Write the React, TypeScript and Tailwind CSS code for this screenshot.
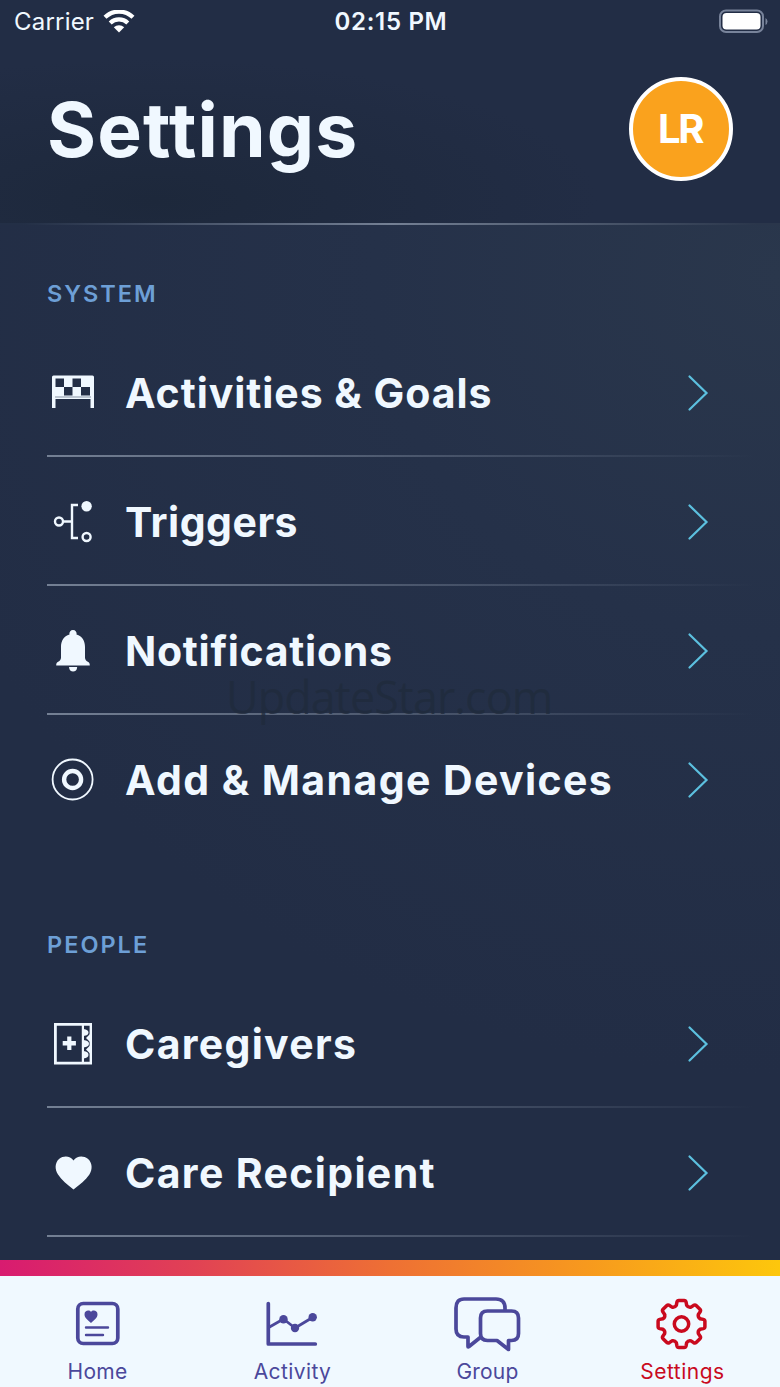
import type { ReactNode } from "react";

function gearPath() {
  const parts: string[] = [];
  for (let i = 0; i < 8; i++) {
    const a = (i * Math.PI) / 4;
    const p = (x: number, y: number) =>
      `${(x * Math.cos(a) - y * Math.sin(a)).toFixed(2)} ${(x * Math.sin(a) + y * Math.cos(a)).toFixed(2)}`;
    parts.push(
      `${i === 0 ? "M" : "L"}${p(-5.2, -18.6)}`,
      `L${p(-4.6, -21.8)}`,
      `Q${p(-4.2, -23.4)} ${p(-2.7, -23.4)}`,
      `L${p(2.7, -23.4)}`,
      `Q${p(4.2, -23.4)} ${p(4.6, -21.8)}`,
      `L${p(5.2, -18.6)}`,
      `Q${p(6.7, -16.2)} ${p(9.47, -16.83)}`
    );
  }
  return parts.join(" ") + "Z";
}

const FlagIcon = () => (
  <svg width="44" height="44" viewBox="0 0 44 44" fill="#f0f8ff">
    <path
      fillRule="evenodd"
      d="M1 6q0-1.500 1.500-1.500h39q1.500 0 1.500 1.500v31h-3.500v-9h-35v9H1zM4.500 7.500v8.500h8.500v-8.500zM13 16v8.500h8.500V16zM21.500 7.500V16H30V7.500zM30 16v8.500h9V16z"
    />
    <path d="M4 25.600h36v1H4z" fill="#8793a5" />
  </svg>
);

const TriggerIcon = () => (
  <svg width="44" height="44" viewBox="0 0 44 44" fill="none" stroke="#f0f8ff" strokeWidth="2.400">
    <circle cx="8" cy="21.500" r="4" />
    <path d="M13 21.500h7.500M27 5h-6v33h6" />
    <circle cx="35.600" cy="6.200" r="5.200" fill="#f0f8ff" stroke="none" />
    <circle cx="35.600" cy="37" r="4" />
  </svg>
);

const BellIcon = () => (
  <svg width="44" height="44" viewBox="0 0 44 44" fill="#f0f8ff">
    <path d="M22 1a3.600 3.600 0 0 1 3.500 4.600C31.200 7.300 34 12 34 18v10.500c0 2 1 3.300 2.800 4.300 1.300.7 2 1.500 2 3.700H5.200c0-2.200.7-3 2-3.700C9 31.800 10 30.500 10 28.500V18C10 12 12.800 7.300 18.500 5.600A3.600 3.600 0 0 1 22 1z" />
    <path d="M18 38h8.200c0 6-8.200 6-8.200 0z" />
  </svg>
);

const DeviceIcon = () => (
  <svg width="44" height="44" viewBox="0 0 44 44" fill="none" stroke="#f0f8ff">
    <circle cx="21.600" cy="21.500" r="20" strokeWidth="1.800" />
    <circle cx="21.600" cy="21.500" r="8.500" strokeWidth="4.400" />
  </svg>
);

const CaregiverIcon = () => (
  <svg width="44" height="44" viewBox="0 0 44 44" fill="#f0f8ff">
    <path fillRule="evenodd" d="M3 1h38v41.500H3zM5.800 3.800v35.900h25V3.800zM33 3.800v35.900h5.600V3.800z" />
    <path d="M16.200 14.500h4.200v4.600h4.500v4.300h-4.500V28h-4.200v-4.600h-4.500v-4.300h4.500z" />
    <path d="M32.500 7q5 .5 5 3.500t-5 3.500zM32.500 18q5.500.5 5.500 3.700t-5.500 3.700zM32.500 29q5 .5 5 3.700t-5 3.700z" />
    <path d="M39 12l-4 4 4 4zM39 23.500l-4 4 4 4z" />
  </svg>
);

const HeartIcon = () => (
  <svg width="44" height="44" viewBox="0 0 44 44" fill="#f0f8ff">
    <path d="M22.500 9.500C25.700 4.700 32.500 4.400 36.800 7.800c4.700 3.900 4.900 10.800 1.600 15.700C34.700 29 29 33.500 22.500 38.500 16 33.500 10.700 29 7 23.500c-3.300-4.900-3.400-11.800 1.300-15.700C12.500 4.400 19.300 4.700 22.500 9.500z" />
  </svg>
);

function Row({ icon, label, spacing, divider = true }: { icon: ReactNode; label: string; spacing: string; divider?: boolean }) {
  return (
    <div className="h-[129px]">
      <div className="flex h-[127px] items-center pl-[4px] pr-[45px]">
        {icon}
        <span className={`ml-[30px] flex-1 whitespace-nowrap pt-[2px] text-[41px] font-bold leading-none text-[#f0f8ff] ${spacing}`}>{label}</span>
        <svg width="22" height="38" viewBox="0 0 22 38" fill="none" stroke="#5cc0df" strokeWidth="2.200" strokeLinecap="round">
          <path d="M2.500 2.500l17 16.500-17 16.500" />
        </svg>
      </div>
      {divider && <div className="-mt-px h-[2px] bg-linear-to-r from-[#748094] to-[#748094]/0" />}
    </div>
  );
}

function Tab({ label, color, spacing, children }: { label: string; color: string; spacing: string; children: ReactNode }) {
  return (
    <div className={`flex flex-col items-center pt-[16px] ${color}`}>
      {children}
      <span className={`mt-[5px] text-[21px] leading-[26px] ${spacing}`}>{label}</span>
    </div>
  );
}

export default function App() {
  return (
    <div className="relative flex h-[1387px] w-[780px] flex-col overflow-hidden bg-[#222d45] font-['Inter',sans-serif]">
      <header className="flex h-[223px] flex-col bg-[radial-gradient(ellipse_at_20%_90%,#1d283b_0%,#222d45_50%)]">
        <div className="grid h-[44px] grid-cols-3 items-center pl-[14px] pr-[12px] text-[24px] leading-none text-[#f0f8ff]">
          <div className="flex items-center gap-[9px]">
            <span className="tracking-[0.2px]">Carrier</span>
            <svg width="32" height="24" viewBox="0 0 32 24" fill="none" stroke="white" strokeWidth="4.200">
              <path d="M2 7.300a20 20 0 0 1 28 0M7.200 12.900a12.600 12.600 0 0 1 17.600 0" />
              <path d="M16 22.500l-5.200-5.200a7.500 7.500 0 0 1 10.400 0z" fill="white" stroke="none" />
            </svg>
          </div>
          <span className="text-center text-[24px] font-semibold tracking-[0.700px]">02:15 PM</span>
          <svg className="justify-self-end" width="50" height="26" viewBox="0 0 50 26">
            <rect x="2" y="1.500" width="43" height="21.500" rx="6" fill="none" stroke="#78839a" strokeWidth="2" />
            <rect x="4.500" y="4" width="38" height="16.500" rx="4" fill="white" />
            <path d="M47.500 9q2 1 2 3.500t-2 3.500z" fill="#78839a" />
          </svg>
        </div>
        <div className="flex items-start justify-between pl-[47px] pr-[47px] pt-[33px]">
          <h1 className="mt-[8px] text-[75px] font-bold leading-[90px] tracking-[1.100px] text-[#f0f8ff]">Settings</h1>
          <div className="flex size-[104px] items-center justify-center rounded-full border-4 border-white bg-[#faa21d] pr-[2px] text-[40px] font-bold leading-none tracking-[-2.500px] text-white">LR</div>
        </div>
      </header>
      <div className="h-[2px] bg-[linear-gradient(90deg,#232f46_3%,#748094_50%,#2a364b_97%)]" />
      <main className="h-[1035px] overflow-hidden bg-[radial-gradient(ellipse_900px_800px_at_780px_50px,#2a374c_0%,#253149_45%,#222d45_100%)] pl-[47px] pr-[26px]">
        <h2 className="pt-[54px] text-[23.500px] font-semibold leading-[30px] tracking-[2px] text-[#6d9fd6]">SYSTEM</h2>
        <div className="pt-[20px]">
          <Row icon={<FlagIcon />} label="Activities & Goals" spacing="tracking-[0.950px]" />
          <Row icon={<TriggerIcon />} label="Triggers" spacing="tracking-[0.500px]" />
          <Row icon={<BellIcon />} label="Notifications" spacing="tracking-[0.720px]" />
          <Row icon={<DeviceIcon />} label="Add & Manage Devices" spacing="tracking-[1.400px]" divider={false} />
        </div>
        <h2 className="pt-[85px] text-[23.500px] font-semibold leading-[30px] tracking-[2px] text-[#6d9fd6]">PEOPLE</h2>
        <div className="pt-[20px]">
          <Row icon={<CaregiverIcon />} label="Caregivers" spacing="tracking-[1.300px]" />
          <Row icon={<HeartIcon />} label="Care Recipient" spacing="tracking-[1.350px]" />
        </div>
      </main>
      <div className="h-[16px] bg-[linear-gradient(90deg,#d81b70_0%,#e14254_25%,#ee7034_50%,#f7991e_75%,#fdc70c_100%)]" />
      <nav className="grid h-[111px] grid-cols-4 bg-[#f0f9ff]">
        <Tab label="Home" color="text-[#4b489b]" spacing="tracking-[0.300px]">
          <svg width="70" height="62" viewBox="1 0 70 62" fill="none" stroke="currentColor" strokeLinecap="round">
            <rect x="15.800" y="11.500" width="40" height="40" rx="5.500" strokeWidth="3.700" />
            <path d="M24 35.500h22M24 43h17" strokeWidth="2.400" />
            <path d="M29 20c1.500-2.400 6.500-1.800 6.500 2.300 0 3.900-3.700 6-6.500 8.700-2.800-2.700-6.500-4.800-6.500-8.700 0-4.100 5-4.700 6.500-2.300z" fill="currentColor" stroke="none" />
          </svg>
        </Tab>
        <Tab label="Activity" color="text-[#4b489b]" spacing="tracking-[0.400px]">
          <svg width="70" height="62" viewBox="0.5 0 70 62" fill="none" stroke="currentColor" strokeLinecap="round" strokeLinejoin="round">
            <path d="M10.800 11.500V52h47" strokeWidth="3.700" />
            <path d="M12 35l14-8 11.500 9L55 25.500" strokeWidth="2.800" />
            <g fill="currentColor" stroke="none">
              <circle cx="26" cy="27.200" r="4.200" />
              <circle cx="37.500" cy="36" r="4.200" />
              <circle cx="55.200" cy="25.300" r="4.200" />
            </g>
          </svg>
        </Tab>
        <Tab label="Group" color="text-[#4b489b]" spacing="tracking-[0.200px]">
          <svg width="70" height="62" viewBox="1.5 0 70 62" fill="none" stroke="currentColor" strokeWidth="3.700" strokeLinejoin="round">
            <path d="M53.500 18v-2q0-9-9-9H12.500q-8 0-8 9v21q0 8 8 8h4v9.500q0 1 1 0L30 44.500" />
            <path d="M36 19h24q7 0 7 7v15.500q0 7-7 7h-3v9L45.500 48.500H36q-7 0-7-7V26q0-7 7-7z" />
          </svg>
        </Tab>
        <Tab label="Settings" color="text-[#c90a1e]" spacing="tracking-[0.500px]">
          <svg width="70" height="62" viewBox="-33.5 -32 70 62" fill="none" stroke="currentColor" strokeWidth="3.500" strokeLinejoin="round">
            <path d={gearPath()} />
            <circle r="7.200" />
          </svg>
        </Tab>
      </nav>
      <div className="pointer-events-none absolute left-[226px] top-[668px] whitespace-nowrap font-['Open_Sans',sans-serif] text-[45px] leading-[58px] tracking-[-1px] text-[#202b3c]/80">UpdateStar.com</div>
    </div>
  );
}
